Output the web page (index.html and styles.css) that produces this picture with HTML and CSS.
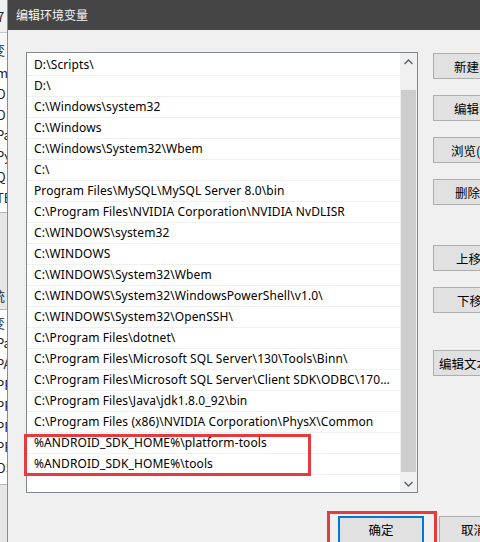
FILE: index.html
```html
<!DOCTYPE html>
<html lang="zh-CN">
<head>
<meta charset="utf-8">
<title>编辑环境变量</title>
<link rel="stylesheet" href="styles.css">
</head>
<body>
<div class="screen">
  <!-- sliver of the parent window behind the dialog -->
  <aside class="behind">
    <div class="b-top"><span>7</span></div>
    <div class="b-head"><span>变</span></div>
    <div class="b-rows">
      <span>m</span><span>O</span><span>O</span><span>Pa</span><span>Py</span><span>Q</span><span>TE</span>
    </div>
    <div class="b-gap"></div>
    <div class="b-head2"><span>统</span></div>
    <div class="b-rows b-rows2">
      <span>变</span><span>Pa</span><span>PA</span><span>PR</span><span>PR</span><span>PR</span><span>PR</span><span>OS</span>
    </div>
    <div class="b-rest"></div>
  </aside>

  <section class="dialog">
    <header class="titlebar">编辑环境变量</header>
    <div class="body">
      <div class="main">
        <div class="listbox">
          <ul class="items">
            <li>D:\Scripts\</li>
            <li>D:\</li>
            <li>C:\Windows\system32</li>
            <li>C:\Windows</li>
            <li>C:\Windows\System32\Wbem</li>
            <li>C:\</li>
            <li>Program Files\MySQL\MySQL Server 8.0\bin</li>
            <li>C:\Program Files\NVIDIA Corporation\NVIDIA NvDLISR</li>
            <li>C:\WINDOWS\system32</li>
            <li>C:\WINDOWS</li>
            <li>C:\WINDOWS\System32\Wbem</li>
            <li>C:\WINDOWS\System32\WindowsPowerShell\v1.0\</li>
            <li>C:\WINDOWS\System32\OpenSSH\</li>
            <li>C:\Program Files\dotnet\</li>
            <li>C:\Program Files\Microsoft SQL Server\130\Tools\Binn\</li>
            <li>C:\Program Files\Microsoft SQL Server\Client SDK\ODBC\170\Tools\Binn\</li>
            <li>C:\Program Files\Java\jdk1.8.0_92\bin</li>
            <li>C:\Program Files (x86)\NVIDIA Corporation\PhysX\Common</li>
            <li>%ANDROID_SDK_HOME%\platform-tools</li>
            <li>%ANDROID_SDK_HOME%\tools</li>
          </ul>
          <div class="scrollbar">
            <div class="sb-btn">
              <svg width="9" height="6" viewBox="0 0 9 6"><path d="M0.5 5 L4.5 1 L8.5 5" fill="none" stroke="#606060" stroke-width="1.4"/></svg>
            </div>
            <div class="sb-track"><div class="sb-thumb"></div></div>
            <div class="sb-btn">
              <svg width="9" height="6" viewBox="0 0 9 6"><path d="M0.5 1 L4.5 5 L8.5 1" fill="none" stroke="#606060" stroke-width="1.4"/></svg>
            </div>
          </div>
          <div class="mark mark-list"></div>
        </div>

        <div class="side">
          <button class="btn">新建(N)</button>
          <button class="btn">编辑(E)</button>
          <button class="btn">浏览(B)...</button>
          <button class="btn">删除(D)</button>
          <div class="spacer-a"></div>
          <button class="btn">上移(U)</button>
          <button class="btn">下移(O)</button>
          <div class="spacer-b"></div>
          <button class="btn">编辑文本(T)...</button>
        </div>
      </div>

      <div class="footer">
        <div class="ok-wrap">
          <button class="btn btn-ok">确定</button>
          <div class="mark mark-ok"></div>
        </div>
        <button class="btn btn-cancel">取消</button>
      </div>
    </div>
  </section>
</div>
</body>
</html>
```

FILE: styles.css
```css
html, body {
  margin: 0;
  padding: 0;
  width: 480px;
  height: 542px;
  overflow: hidden;
  background: #f0f0f0;
}

body {
  font-family: "Noto Sans", "Noto Sans CJK SC", sans-serif;
  font-size: 12px;
  color: #000;
}

.screen {
  display: flex;
  width: 480px;
  height: 542px;
}

/* ---------- parent window sliver ---------- */
.behind {
  width: 7px;
  flex: none;
  overflow: hidden;
  border-right: 1px solid #8c8c8c;
  background: #fff;
  display: flex;
  flex-direction: column;
  font-family: "Noto Sans CJK SC", sans-serif;
  font-size: 13px;
  line-height: 21px;
  color: #222;
}
.behind span {
  display: block;
  white-space: nowrap;
  text-indent: -4px;
}
.b-top {
  height: 32px;
  background: #f0f0f0;
  border-bottom: 1px solid #c8c8c8;
  display: flex;
  align-items: center;
}
.b-top span { text-indent: -3px; }
.b-head {
  height: 27px;
  display: flex;
  align-items: flex-end;
  background: #f6f6f6;
}
.b-head span { text-indent: -8px; }
.b-rows { padding-top: 2px; }
.b-rows span { height: 20.8px; }
.b-gap {
  height: 70px;
  margin-top: 4px;
  border-top: 1px solid #b8b8b8;
  background: #e6e6e6;
}
.b-head2 {
  height: 26px;
  background: #e6e6e6;
  border-bottom: 1px solid #b8b8b8;
  display: flex;
  align-items: center;
}
.b-head2 span { text-indent: -8px; }
.b-rows2 span:first-child { text-indent: -8px; }
.b-rest {
  flex: 1;
  margin-top: 6px;
  border-top: 1px solid #b8b8b8;
  background: #e6e6e6;
}

/* ---------- dialog ---------- */
.dialog {
  flex: 1;
  display: flex;
  flex-direction: column;
  background: #f0f0f0;
}

.titlebar {
  height: 30px;
  flex: none;
  background: #454545;
  color: #f4f4f4;
  font-family: "Noto Sans CJK SC", sans-serif;
  font-size: 12px;
  line-height: 30px;
  padding-left: 8px;
}

.body {
  padding: 22px 0 0 18px;
  display: flex;
  flex-direction: column;
}

.main {
  display: flex;
  gap: 15px;
}

/* list with scrollbar */
.listbox {
  position: relative;
  width: 390px;
  height: 439px;
  border: 1px solid #828790;
  background: #fff;
  display: flex;
  flex: none;
}

.items {
  list-style: none;
  margin: 0;
  padding: 2px 0 0;
  flex: 1;
  min-width: 0;
}
.items li {
  height: 20px;
  line-height: 20px;
  border-bottom: 1px solid #f0f0f0;
  padding-left: 7px;
  padding-right: 6px;
  font-size: 12px;
  letter-spacing: 0.1px;
  white-space: nowrap;
  overflow: hidden;
  text-overflow: ellipsis;
}

.scrollbar {
  width: 17px;
  flex: none;
  background: #f0f0f0;
  display: flex;
  flex-direction: column;
}
.sb-btn {
  height: 17px;
  display: flex;
  align-items: center;
  justify-content: center;
}
.sb-track {
  flex: 1;
  padding: 20px 1px 3px;
  display: flex;
}
.sb-thumb {
  flex: 1;
  background: #cdcdcd;
}

/* highlight frames drawn over the content */
.mark {
  position: absolute;
  border: 3px solid #e53b3f;
  pointer-events: none;
}
.mark-list {
  left: -3px;
  top: 381px;
  width: 281px;
  height: 36px;
}

/* right-hand buttons */
.side {
  display: flex;
  flex-direction: column;
  gap: 16px;
  padding-top: 1px;
}
.btn {
  width: 75px;
  height: 26px;
  flex: none;
  border: 1px solid #adadad;
  background: #e1e1e1;
  font-family: "Noto Sans CJK SC", sans-serif;
  font-size: 12.5px;
  color: #000;
  padding: 0 0 0 10px;
  text-align: left;
  white-space: nowrap;
  overflow: hidden;
}
.side .btn { padding-left: 20px; }
.side .btn:nth-child(3) { padding-left: 17px; }
.side .btn:nth-child(4) { padding-left: 21px; }
.side .btn:nth-child(6) { padding-left: 22px; }
.side .btn:nth-child(7) { padding-left: 23px; }
.side .btn:last-child { padding-left: 5px; }
.spacer-a { height: 8px; }
.spacer-b { height: 5px; }

/* bottom row */
.footer {
  display: flex;
  margin-top: 23px;
  padding-left: 312px;
  gap: 15px;
}
.ok-wrap {
  position: relative;
  flex: none;
}
.btn-ok {
  width: 86px;
  height: 30px;
  border: 2px solid #0078d7;
  text-align: center;
  padding: 0 0 4px;
}
.mark-ok {
  left: -11px;
  top: -5px;
  width: 104px;
  height: 40px;
}
.btn-cancel {
  width: 80px;
  height: 30px;
  padding: 0 0 4px 21px;
}
```
